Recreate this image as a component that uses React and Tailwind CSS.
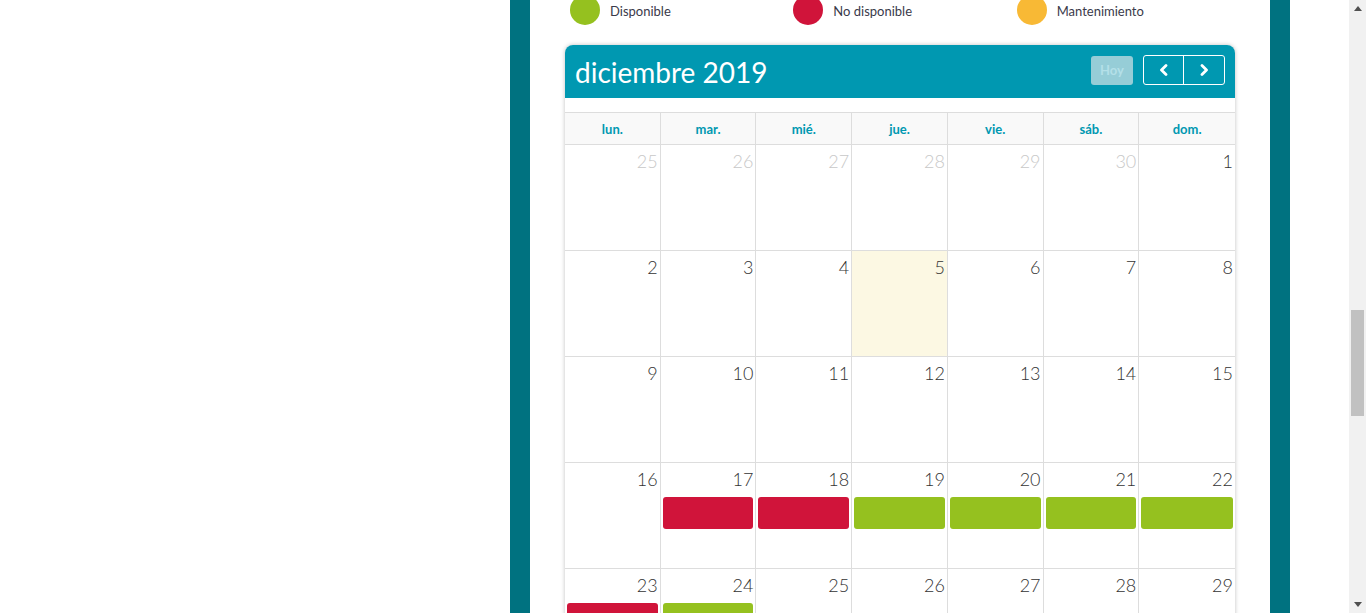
import React from 'react';

const days = ['lun.', 'mar.', 'mié.', 'jue.', 'vie.', 'sáb.', 'dom.'];

// estado de cada día: r = no disponible, g = disponible
const weeks = [
  [[25, 1], [26, 1], [27, 1], [28, 1], [29, 1], [30, 1], [1]],
  [[2], [3], [4], [5, 0, 'today'], [6], [7], [8]],
  [[9], [10], [11], [12], [13], [14], [15]],
  [[16], [17, 0, 'r'], [18, 0, 'r'], [19, 0, 'g'], [20, 0, 'g'], [21, 0, 'g'], [22, 0, 'g']],
  [[23, 0, 'r'], [24, 0, 'g'], [25], [26], [27], [28], [29]],
];

const Legend = ({ color, label }) => (
  <div className="flex items-center gap-[10px] pl-[5px]">
    <span className={`w-[30px] h-[30px] rounded-full ${color}`} />
    <span className="text-[13px] leading-[16px] pt-[2px] text-[#3a3a4a]">{label}</span>
  </div>
);

const DayCell = ({ day }) => {
  const [num, other, flag] = day;
  return (
    <div
      className={`h-[106px] border-r border-b border-[#dddddd] last:border-r-0 flex flex-col ${
        flag === 'today' ? 'bg-[#fcf8e3]' : 'bg-white'
      }`}
    >
      <div
        className={`text-right pr-[2px] pt-[5px] text-[18px] leading-[22px] font-light ${
          other ? 'text-[#c8c8c8]' : 'text-[#333333]'
        }`}
      >
        {num}
      </div>
      {(flag === 'r' || flag === 'g') && (
        <div
          className={`mx-[2px] mt-[7px] h-[32px] rounded-[3px] ${
            flag === 'r' ? 'bg-[#d0143a]' : 'bg-[#95c11f]'
          }`}
        />
      )}
    </div>
  );
};

const Scrollbar = () => (
  <div className="w-[17px] h-full bg-[#f1f1f1] flex flex-col items-center shrink-0">
    <div className="h-[17px] flex items-center justify-center">
      <svg width="8" height="5" viewBox="0 0 8 5"><path d="M0 5 L4 0 L8 5 Z" fill="#505050" /></svg>
    </div>
    <div className="mt-[293px] w-[13px] h-[106px] bg-[#c1c1c1]" />
    <div className="flex-1" />
    <div className="h-[17px] flex items-center justify-center">
      <svg width="8" height="5" viewBox="0 0 8 5"><path d="M0 0 L8 0 L4 5 Z" fill="#505050" /></svg>
    </div>
  </div>
);

const App = () => {
  return (
    <div className="w-full h-[613px] flex overflow-hidden bg-white" style={{ fontFamily: 'Lato, "Open Sans", sans-serif' }}>
      <div className="w-[510px] shrink-0" />
      <div className="w-[780px] shrink-0 border-x-[20px] border-[#007280] bg-white px-[35px] overflow-hidden">
        {/* Leyenda */}
        <div className="grid grid-cols-3 mt-[-5px]">
          <Legend color="bg-[#95c11f]" label="Disponible" />
          <Legend color="bg-[#d0143a]" label="No disponible" />
          <Legend color="bg-[#f8b935]" label="Mantenimiento" />
        </div>

        {/* Calendario */}
        <div className="mt-[20px] rounded-t-[8px] shadow-[0_0_4px_rgba(0,0,0,0.25)] bg-white">
          <div className="h-[53px] bg-[#0098b1] rounded-t-[8px] flex items-start justify-between pl-[10px] pr-[10px]">
            <h2 className="text-[28px] leading-[55px] text-white">diciembre 2019</h2>
            <div className="flex items-center gap-[10px] pt-[10px]">
              <button className="w-[42px] h-[29px] rounded-[3px] bg-[#96cdd7] text-[#b4e0e8] text-[13px] font-bold pt-[2px]">
                Hoy
              </button>
              <div className="flex h-[30px] border border-white rounded-[3px]">
                <button className="w-[40px] flex items-center justify-center border-r border-white text-white">
                  <svg width="12" height="12" viewBox="0 0 12 12" fill="none" stroke="white" strokeWidth="2.8" strokeLinecap="round" strokeLinejoin="round">
                    <path d="M8 1.5 L3.5 6 L8 10.5" />
                  </svg>
                </button>
                <button className="w-[40px] flex items-center justify-center text-white">
                  <svg width="12" height="12" viewBox="0 0 12 12" fill="none" stroke="white" strokeWidth="2.8" strokeLinecap="round" strokeLinejoin="round">
                    <path d="M4 1.5 L8.5 6 L4 10.5" />
                  </svg>
                </button>
              </div>
            </div>
          </div>

          <div className="h-[14px]" />

          <div className="grid grid-cols-7 border-t border-b border-[#dddddd] bg-[#f9f9f9]">
            {days.map((d) => (
              <div key={d} className="h-[31px] pt-[2px] flex items-center justify-center border-r border-[#dddddd] last:border-r-0 text-[13px] font-bold text-[#0098b1]">
                {d}
              </div>
            ))}
          </div>

          {weeks.map((w, i) => (
            <div key={i} className="grid grid-cols-7">
              {w.map((d, j) => (
                <DayCell key={j} day={d} />
              ))}
            </div>
          ))}
        </div>
      </div>
      <div className="flex-1" />
      <Scrollbar />
    </div>
  );
};

export default App;
